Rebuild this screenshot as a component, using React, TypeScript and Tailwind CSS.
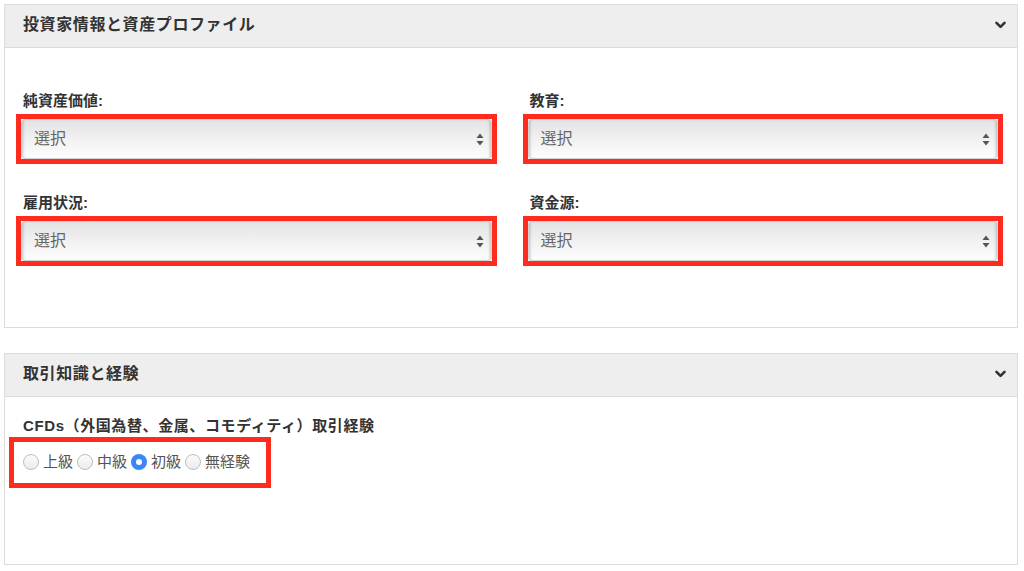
import React from 'react';

const FONT = '"Liberation Sans", "Noto Sans CJK JP", sans-serif';

function Chevron() {
  return (
    <svg width="11" height="8" viewBox="0 0 11 8" fill="none">
      <path d="M1.5 1.8l4 4 4-4" stroke="#333" strokeWidth="2.6" strokeLinecap="round" strokeLinejoin="round" />
    </svg>
  );
}

function UpDown() {
  return (
    <svg width="8" height="13" viewBox="0 0 8 13">
      <path d="M4 0.5L7.5 5H0.5Z" fill="#555" />
      <path d="M4 12.5L7.5 8H0.5Z" fill="#555" />
    </svg>
  );
}

function PanelHeader({ title }: { title: string }) {
  return (
    <div className="h-[43px] bg-[#eeeeee] border-b border-[#dcdcdc] flex items-center justify-between pl-[18px] pr-[11px] pb-[2px]">
      <h2 className="text-[16px] font-bold text-[#333] tracking-[0.6px]">{title}</h2>
      <Chevron />
    </div>
  );
}

function SelectField({ label }: { label: string }) {
  return (
    <div>
      <label className="block pl-[2px] h-[20px] leading-[20px] text-[15px] font-bold text-[#333] mb-[8px]">
        {label}
      </label>
      <div className="outline-[5px] outline-solid outline-[#fe2b1e]">
        <div className="h-[40px] rounded-[3px] border border-[#d4d4d4] bg-linear-to-b from-[#e3e3e3] via-[#f1f1f1] to-[#fdfdfd] shadow-[inset_3px_0_3px_-2px_rgba(0,0,0,0.22),inset_-3px_0_3px_-2px_rgba(0,0,0,0.22)] flex items-center justify-between pl-[12px] pr-[7px]">
          <span className="text-[16px] text-[#666]">選択</span>
          <UpDown />
        </div>
      </div>
    </div>
  );
}

function Radio({ label, checked }: { label: string; checked?: boolean }) {
  return (
    <span className="flex items-center mr-[4px]">
      {checked ? (
        <span className="w-[16px] h-[16px] rounded-full bg-[#3b87f5] flex items-center justify-center">
          <span className="w-[6px] h-[6px] rounded-full bg-white" />
        </span>
      ) : (
        <span className="w-[16px] h-[16px] rounded-full border border-[#bdbdbd] bg-linear-to-b from-[#fbfbfb] to-[#ececec]" />
      )}
      <span className="ml-[4px] text-[15px] text-[#555] leading-[20px]">{label}</span>
    </span>
  );
}

export default function App() {
  return (
    <div className="min-h-screen bg-white pt-[4px] pl-[4px] pr-[6px]" style={{ fontFamily: FONT }}>
      <section className="border border-[#dcdcdc]">
        <PanelHeader title="投資家情報と資産プロファイル" />
        <div className="pt-[43px] pb-[66px] pl-[16px] pr-[19px] grid grid-cols-2 gap-x-[36px] gap-y-[34px]">
          <SelectField label="純資産価値:" />
          <SelectField label="教育:" />
          <SelectField label="雇用状況:" />
          <SelectField label="資金源:" />
        </div>
      </section>

      <section className="border border-[#dcdcdc] mt-[25px]">
        <PanelHeader title="取引知識と経験" />
        <div className="pt-[19px] pb-[92px] pl-[18px] pr-[19px]">
          <p className="h-[20px] leading-[20px] text-[15px] font-bold text-[#333] tracking-[0.6px]">
            CFDs（外国為替、金属、コモディティ）取引経験
          </p>
          <div className="relative mt-[16px] h-[20px] flex items-center">
            <Radio label="上級" />
            <Radio label="中級" />
            <Radio label="初級" checked />
            <Radio label="無経験" />
            <div className="pointer-events-none absolute left-[-14px] top-[-15px] w-[262px] h-[51px] border-[5px] border-[#fe2b1e]" />
          </div>
        </div>
      </section>
    </div>
  );
}
